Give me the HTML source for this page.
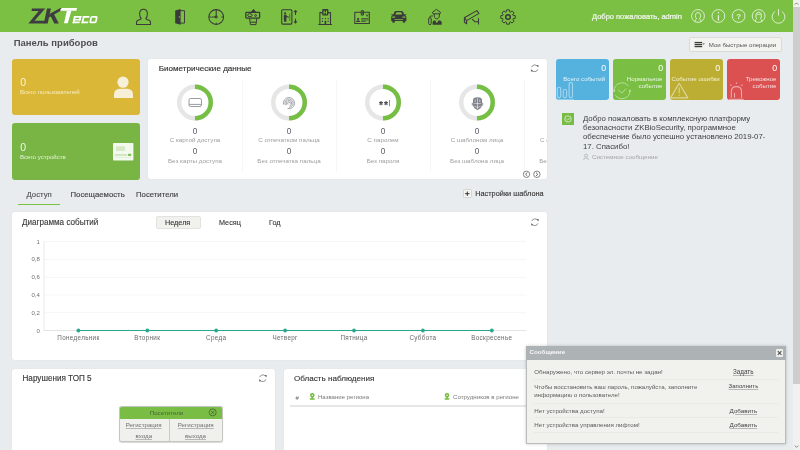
<!DOCTYPE html>
<html><head><meta charset="utf-8">
<style>
*{margin:0;padding:0;box-sizing:border-box}
html,body{width:800px;height:450px;overflow:hidden}
body{will-change:transform;background:#e8ecef;font-family:"Liberation Sans",sans-serif;position:relative;color:#333}
.a{position:absolute}
#hdr{left:0;top:0;width:793px;height:32.4px;background:#7bbf43}
#sb{left:793px;top:0;width:7px;height:450px;background:#f1f1f1}
#thumb{left:793px;top:7px;width:7px;height:377px;background:#cdcdcd}
.panel{position:absolute;background:#fff;border-radius:3px;box-shadow:0 0 0 0.6px #e1e5e8}
.card{position:absolute;border-radius:3px;color:#fff;margin-top:0.4px}
.t{position:absolute;white-space:nowrap;line-height:1}
svg{position:absolute;overflow:visible}
</style></head><body>
<div id="hdr" class="a"></div>
<!-- HEADER -->
<svg style="left:0;top:0" width="793" height="32" viewBox="0 0 793 32">
  <!-- logo -->
  <g fill="#3e3b42">
    <path d="M32 8.4 H45.2 L34.5 20.7 H45.4 L44.8 23.4 H28.4 L38.7 10.9 H31.5 Z"/>
    <path d="M47 8.4 H50.9 L47.7 23.4 H43.8 Z"/>
    <path d="M49.4 13.9 L60 8.3 H65 L48.8 17.4 Z"/>
    <path d="M50.4 15.8 L53.8 13.8 L58.8 23.4 H54.4 Z"/>
  </g>
  <g fill="#fff">
    <path d="M61.8 8.1 H77 L76.4 10.8 H60.2 L60.5 9.5 Z"/>
    <path d="M66.8 10.7 H71.4 L67.8 23.3 H64 Z"/>
  </g>
  <g fill="#fff" transform="translate(0 23.3) skewX(-12) translate(0 -23.3)">
    <rect x="72.5" y="16" width="7.4" height="1.7"/>
    <rect x="72.5" y="18.9" width="7.4" height="1.5"/>
    <rect x="72.5" y="21.6" width="7" height="1.7"/>
    <rect x="72.5" y="16" width="1.8" height="7.3"/>
    <rect x="78.1" y="16" width="1.8" height="4.4"/>
    <rect x="81.4" y="16" width="6.6" height="1.7"/>
    <rect x="81.4" y="21.6" width="6.6" height="1.7"/>
    <rect x="81.4" y="16" width="1.8" height="7.3"/>
    <rect x="89.9" y="16.85" width="5.6" height="5.6" rx="0.8" fill="none" stroke="#fff" stroke-width="1.7"/>
  </g>
  <g fill="none" stroke="#3a3a3a" stroke-width="1.05" stroke-linecap="round" stroke-linejoin="round">
    <!-- person -->
    <path d="M136.5 24.5 L136.5 22.3 Q136.8 20 140.2 19.5 L141.2 18.6 Q139.6 17.2 139.6 13.6 Q139.8 9.2 143.5 9.2 Q147.2 9.2 147.4 13.6 Q147.4 17.2 145.8 18.6 L146.8 19.5 Q150.2 20 150.5 22.3 L150.5 24.5 Z"/>
    <!-- door -->
    <path d="M180.4 10.7 H184.5 V23.1 H180.4" stroke-width="0.95"/>
    <!-- clock -->
    <circle cx="216.2" cy="17" r="7.4"/>
    <path d="M216.2 10.2 V16 M215.2 17 H211.8 M216.2 9.6 V11 M216.2 23 V24.4 M209.4 17 H210.6 M221.8 17 H223"/>
    <circle cx="216.2" cy="17" r="0.9"/>
    <!-- elevator -->
    <rect x="281.7" y="9.8" width="10.2" height="14.3" rx="1"/>
    <path d="M295.5 10.5 V14.5 M294.3 11.8 L295.5 10.5 L296.7 11.8 M295.5 19 V23 M294.3 21.7 L295.5 23 L296.7 21.7"/>
    <path d="M289.8 14 V20.5" stroke-width="0.6"/>
    <!-- hospital -->
    <path d="M318.8 24.4 H331.6 M319.9 24.4 V12.6 H322.3 M328.3 12.6 H330.5 V24.4"/>
    <!-- id card -->
    <path d="M361 12.3 H354.8 V23.5 H369.3 V12.3 H363.6"/>
    <rect x="361.2" y="10.4" width="2.3" height="4.8" rx="1.1"/>
    <path d="M366.2 14.6 L367.2 16.4 L368 14.6 M361.6 18.6 H368 M361.6 20 H368 M361.6 21.4 H365.5" stroke-width="0.75"/>
    <!-- camera -->
    <path d="M464.4 17.8 L476.8 10.6 L479 13.4 L466.6 20.6 Z"/>
    <path d="M464.4 17.8 V22 L466.6 23.8 V20.6 M472.5 19.3 L474.8 21.7 H478.5 M478.5 18.5 V24"/>
    <!-- gear -->
    <path d="M513.08 14.90 L513.26 15.39 L515.17 15.61 L515.17 18.39 L513.26 18.61 L513.08 19.10 L512.86 19.58 L514.05 21.08 L512.08 23.05 L510.58 21.86 L510.10 22.08 L509.61 22.26 L509.39 24.17 L506.61 24.17 L506.39 22.26 L505.90 22.08 L505.42 21.86 L503.92 23.05 L501.95 21.08 L503.14 19.58 L502.92 19.10 L502.74 18.61 L500.83 18.39 L500.83 15.61 L502.74 15.39 L502.92 14.90 L503.14 14.42 L501.95 12.92 L503.92 10.95 L505.42 12.14 L505.90 11.92 L506.39 11.74 L506.61 9.83 L509.39 9.83 L509.61 11.74 L510.10 11.92 L510.58 12.14 L512.08 10.95 L514.05 12.92 L512.86 14.42 Z" stroke-width="1"/>
    <circle cx="508" cy="17" r="2.3" stroke-width="1.5"/>
  </g>
  <g fill="#3a3a3a">
    <!-- door leaf -->
    <path d="M175.2 10.6 L180.6 9.1 V24.8 L175.2 23.3 Z"/><circle cx="179.4" cy="17" r="0.75" fill="#7bbf43"/>
    
    <!-- elevator person -->
    <circle cx="285.1" cy="13.3" r="1.1"/>
    <path d="M283.9 14.7 H286.4 L286.7 16 L289.2 16.8 L289 17.5 L286.4 17.2 V21.8 H284.1 L283.8 18.5 Z"/>
    <!-- hospital H + windows -->
    <rect x="322.2" y="9.1" width="6.2" height="6.4" rx="1"/>
    <path d="M323.6 10.6 h1 v1.6 h1.4 v-1.6 h1 v3.6 h-1 v-1.1 h-1.4 v1.1 h-1 Z" fill="#7bbf43"/>
    <rect x="321.9" y="18.1" width="1.2" height="1"/><rect x="324.8" y="18.1" width="1.2" height="1"/><rect x="327.6" y="18.1" width="1.2" height="1"/>
    <rect x="321.9" y="20.6" width="1" height="1.4"/><rect x="327.6" y="20.6" width="1" height="1.4"/>
    <rect x="324.6" y="20.8" width="1.6" height="3.6"/>
    <!-- id person -->
    <circle cx="358.1" cy="19" r="1.1"/>
    <path d="M356 21.9 Q356.2 20.2 358.1 20.2 Q360 20.2 360.2 21.9 Z"/>
    <rect x="361.9" y="11.6" width="0.9" height="2.6"/>
    <!-- car -->
    <path fill-rule="evenodd" d="M391.2 20.9 V17.2 Q391.2 15.6 392.8 15.1 L391 14.6 L391.3 13.9 L393.3 14.4 L394.7 11.5 Q395.1 10.9 396 10.9 H401.6 Q402.5 10.9 402.9 11.5 L404.3 14.4 L406.3 13.9 L406.6 14.6 L404.8 15.1 Q406.4 15.6 406.4 17.2 V20.9 Z M395.3 14.6 H402.3 L401.5 12.7 Q401.3 12.3 400.8 12.3 H396.8 Q396.3 12.3 396.1 12.7 Z M392.2 16.6 H395.3 L395 17.7 H392.2 Z M405.4 16.6 H402.3 L402.6 17.7 H405.4 Z M394.6 19.2 H403 V19.9 H394.6 Z"/>
    <rect x="392.3" y="20.8" width="2.6" height="1.8"/><rect x="402.7" y="20.8" width="2.6" height="1.8"/>
    <!-- police -->
    <path d="M432.6 24.8 V21.9 Q433 20.6 435 20.3 L436.8 23.2 L438.6 20.3 Q441.2 20.6 441.7 21.9 V24.8 Z"/>
  </g>
  <g fill="none" stroke="#3a3a3a" stroke-width="1">
    <path d="M432.4 12.4 L436.4 9.4 L440.6 12.4 L440 13.8 H433 Z"/>
    <path d="M434.2 14 Q434 18.8 436.8 18.9 Q439.6 18.8 439.4 14"/>
    <rect x="428.7" y="17.6" width="2.5" height="7.1" rx="1.25"/>
    <path d="M429.4 17.6 Q429.8 15.4 432.8 15.9"/>
    <!-- money hand -->
    <rect x="245.8" y="12.4" width="13.8" height="5.6" rx="0.5" stroke-width="1.25"/>
    <ellipse cx="249.9" cy="15.2" rx="2.3" ry="1.5"/>
    <circle cx="255.6" cy="15.5" r="0.9"/>
    <path d="M249.6 18.2 L250.4 24.6 H256 L256.8 18.2 M250.4 22.2 H256"/>
    <path d="M251.2 12.4 L253.5 9.4 L255.8 12.4 Z" fill="#3a3a3a"/>
  </g>
  <!-- right icons -->
  <g fill="none" stroke="#e6f2dc" stroke-width="0.9">
    <circle cx="698" cy="16" r="6.4"/>
    <path d="M695 21.6 Q695 19.5 696.6 18.8 Q695.4 17.6 695.4 15.5 Q695.5 12.5 698 12.5 Q700.5 12.5 700.6 15.5 Q700.6 17.6 699.4 18.8 Q701 19.5 701 21.6"/>
    <circle cx="718.4" cy="16" r="6.4"/>
    <path d="M718.4 15.3 V20.4" stroke-width="1.2"/>
    <circle cx="738.6" cy="16" r="6.4"/>
    <circle cx="758.6" cy="16" r="6.4"/>
    <path d="M755.4 21.8 Q755.2 19.4 756.7 18.8 Q755.8 17.6 755.8 15.3 Q756 12.2 758.6 12.2 Q761.2 12.2 761.4 15.3 Q761.4 17.6 760.5 18.8 Q762 19.4 761.8 21.8"/>
    <path d="M756.6 15 Q758.6 13.2 760.6 15" />
    <path d="M775.2 11.4 A6.4 6.4 0 1 0 781.8 11.4"/>
    <path d="M778.5 9 V15.6"/>
  </g>
  <circle cx="718.4" cy="12.8" r="0.8" fill="#e6f2dc"/>
  <text x="738.6" y="19" text-anchor="middle" font-family="Liberation Sans" font-size="8" font-weight="bold" fill="#e6f2dc">?</text>
  <text x="592" y="18.6" font-family="Liberation Sans" font-size="7.5" fill="#f4f9ef" stroke="#f4f9ef" stroke-width="0.2">Добро пожаловать, admin</text>
</svg>
<div id="sb" class="a"></div>
<div id="thumb" class="a"></div>
<!--CONTENT-->
<!-- title -->
<div class="t" style="left:13.7px;top:38.1px;font-size:9.5px;font-weight:bold;color:#505050">Панель приборов</div>

<!-- left cards -->
<div class="card" style="left:12px;top:58.2px;width:127.5px;height:56.6px;background:#dab737"></div>
<div class="t" style="left:20.2px;top:76.7px;font-size:10.5px;color:#fbf3d6">0</div>
<div class="t" style="left:20px;top:88.9px;font-size:6.1px;color:#f6ebc4">Всего пользователей</div>
<svg style="left:0;top:0" width="1" height="1">
  <circle cx="123" cy="82.2" r="5.6" fill="#f7efd8"/>
  <path d="M114 98 V95 Q114 88.8 120 88.8 H126.9 Q133 88.8 133 95 V98 Z" fill="#f7efd8"/>
</svg>
<div class="card" style="left:12px;top:122.8px;width:127.5px;height:56.4px;background:#78b545"></div>
<div class="t" style="left:20.2px;top:141.6px;font-size:10.5px;color:#eef7e6">0</div>
<div class="t" style="left:20px;top:153.9px;font-size:6.1px;color:#e4f1da">Всего устройств</div>
<svg style="left:0;top:0" width="1" height="1">
  <rect x="113" y="143" width="20.4" height="17.5" rx="0.8" fill="#f4f9f0"/>
  <rect x="116" y="146.3" width="9" height="4.6" fill="#d5e9c6"/>
  <rect x="115" y="154.6" width="12" height="0.8" fill="#9ccc7c"/>
  <rect x="127.8" y="153.8" width="3.6" height="2.2" rx="1" fill="#7fbf55"/>
  <rect x="115" y="157.3" width="16" height="0.6" fill="#d8ebcb"/>
  <circle cx="130.5" cy="147" r="0.35" fill="#bcdca8"/><circle cx="130.5" cy="149" r="0.35" fill="#bcdca8"/>
</svg>

<!-- biometric panel -->
<div class="panel" style="left:148px;top:59px;width:399px;height:120px;overflow:hidden">
  <div class="t" style="left:10.7px;top:6.3px;font-size:8.1px;color:#333;-webkit-text-stroke:0.15px #333">Биометрические данные</div>
<svg style="left:-148px;top:-59px" width="800" height="450">
<circle cx="195" cy="102.4" r="15.75" fill="none" stroke="#e6e6e6" stroke-width="4.5"/>
<path d="M195 86.65 A15.75 15.75 0 0 1 195 118.15" fill="none" stroke="#75bf44" stroke-width="4.5"/>
<text x="195" y="133.8" text-anchor="middle" font-size="8.2" fill="#565b66">0</text>
<text x="195" y="141.5" text-anchor="middle" font-size="6.25" fill="#9c9c9c">С картой доступа</text>
<text x="195" y="154.2" text-anchor="middle" font-size="8.2" fill="#565b66">0</text>
<text x="195" y="162.5" text-anchor="middle" font-size="6.25" fill="#9c9c9c">Без карты доступа</text>
<rect x="242" y="79" width="0.7" height="93" fill="#f2f2f2"/>
<circle cx="289" cy="102.4" r="15.75" fill="none" stroke="#e6e6e6" stroke-width="4.5"/>
<path d="M289 86.65 A15.75 15.75 0 0 1 289 118.15" fill="none" stroke="#75bf44" stroke-width="4.5"/>
<text x="289" y="133.8" text-anchor="middle" font-size="8.2" fill="#565b66">0</text>
<text x="289" y="141.5" text-anchor="middle" font-size="6.25" fill="#9c9c9c">С отпечатком пальца</text>
<text x="289" y="154.2" text-anchor="middle" font-size="8.2" fill="#565b66">0</text>
<text x="289" y="162.5" text-anchor="middle" font-size="6.25" fill="#9c9c9c">Без отпечатка пальца</text>
<rect x="336" y="79" width="0.7" height="93" fill="#f2f2f2"/>
<circle cx="383" cy="102.4" r="15.75" fill="none" stroke="#e6e6e6" stroke-width="4.5"/>
<path d="M383 86.65 A15.75 15.75 0 0 1 383 118.15" fill="none" stroke="#75bf44" stroke-width="4.5"/>
<text x="383" y="133.8" text-anchor="middle" font-size="8.2" fill="#565b66">0</text>
<text x="383" y="141.5" text-anchor="middle" font-size="6.25" fill="#9c9c9c">С паролем</text>
<text x="383" y="154.2" text-anchor="middle" font-size="8.2" fill="#565b66">0</text>
<text x="383" y="162.5" text-anchor="middle" font-size="6.25" fill="#9c9c9c">Без пароля</text>
<rect x="430" y="79" width="0.7" height="93" fill="#f2f2f2"/>
<circle cx="477" cy="102.4" r="15.75" fill="none" stroke="#e6e6e6" stroke-width="4.5"/>
<path d="M477 86.65 A15.75 15.75 0 0 1 477 118.15" fill="none" stroke="#75bf44" stroke-width="4.5"/>
<text x="477" y="133.8" text-anchor="middle" font-size="8.2" fill="#565b66">0</text>
<text x="477" y="141.5" text-anchor="middle" font-size="6.25" fill="#9c9c9c">С шаблоном лица</text>
<text x="477" y="154.2" text-anchor="middle" font-size="8.2" fill="#565b66">0</text>
<text x="477" y="162.5" text-anchor="middle" font-size="6.25" fill="#9c9c9c">Без шаблона лица</text>
<rect x="524" y="79" width="0.7" height="93" fill="#f2f2f2"/>
<circle cx="571" cy="102.4" r="15.75" fill="none" stroke="#e6e6e6" stroke-width="4.5"/>
<path d="M571 86.65 A15.75 15.75 0 0 1 571 118.15" fill="none" stroke="#75bf44" stroke-width="4.5"/>
<text x="571" y="133.8" text-anchor="middle" font-size="8.2" fill="#565b66">0</text>
<text x="571" y="141.5" text-anchor="middle" font-size="6.25" fill="#9c9c9c">С отпечатком ладони</text>
<text x="571" y="154.2" text-anchor="middle" font-size="8.2" fill="#565b66">0</text>
<text x="571" y="162.5" text-anchor="middle" font-size="6.25" fill="#9c9c9c">Без отпечатка ладони</text>
<g fill="none" stroke="#777983" stroke-width="0.75">
<rect x="189" y="98.5" width="12.5" height="8" rx="1.6"/>
<path d="M189.3 104.4 H201.2"/>
</g>
<g fill="none" stroke="#6a6c75" stroke-width="0.6"><path d="M288.35 104.23 A1.3 1.3 0 1 1 289.65 104.23"/><path d="M287.09 105.01 A2.7 2.7 0 1 1 289.70 105.71"/><path d="M285.45 105.15 A4.1 4.1 0 1 1 289.00 107.20"/><path d="M283.59 104.55 A5.6 5.6 0 1 1 287.55 108.51"/></g>
<path d="M381.00 101.10 L381.00 105.30 M382.82 102.15 L379.18 104.25 M382.82 104.25 L379.18 102.15 M386.00 101.10 L386.00 105.30 M387.82 102.15 L384.18 104.25 M387.82 104.25 L384.18 102.15 " stroke="#4d4f58" stroke-width="1.1" fill="none"/>
<rect x="389" y="100" width="0.8" height="6.2" fill="#6d6f78"/>
<path d="M473 100 Q473 97.2 477.5 97.2 Q482 97.2 482 100 V104.5 Q482 108.2 477.5 109.9 Q473 108.2 473 104.5 Z" fill="#80828b"/>
<path d="M472.3 102.8 V105.6 M482.7 102.8 V105.6" stroke="#80828b" stroke-width="0.9"/>
<path d="M477.5 98 V109 M473.8 103.6 H481.2 M475.2 99.5 V102 M479.8 99.5 V102 M474.5 106.5 Q477.5 108 480.5 106.5" stroke="#fff" stroke-width="0.55" fill="none"/>
<g fill="#7b7d86"><circle cx="526.5" cy="174" r="0.1"/></g>
<path d="M530.5 65.2 A3.2 3.2 0 1 0 531.4 70.5 M539.5 71 A3.2 3.2 0 1 0 538.6 65.5" fill="none" stroke="#888" stroke-width="0"/>

</svg>
</div>

<!-- panel extras -->
<svg style="left:0;top:0" width="1" height="1">
  <g fill="none" stroke="#666" stroke-width="0.7">
    <path d="M537.6 66.6 A3.3 3.3 0 0 0 531.6 67.2"/>
    <path d="M531.8 70 A3.3 3.3 0 0 0 537.8 69.4"/>
  </g>
  <path d="M536.2 65.2 L538.6 65 L538.2 67.6 Z M533.2 71.4 L530.8 71.6 L531.2 69 Z" fill="#707070"/>
  <g fill="none" stroke="#666" stroke-width="0.8">
    <circle cx="526.5" cy="174.3" r="3.2"/>
    <circle cx="536.9" cy="174.3" r="3.2"/>
  </g>
  <path d="M527.4 172.6 L525.6 174.3 L527.4 176" fill="none" stroke="#555" stroke-width="0.9"/>
  <path d="M536 172.6 L537.8 174.3 L536 176" fill="none" stroke="#555" stroke-width="0.9"/>
</svg>

<!-- quick ops button -->
<div class="a" style="left:689.3px;top:37.4px;width:93.2px;height:14.2px;background:#f3f4ef;border:0.8px solid #d9dbd5;border-radius:2px"></div>
<svg style="left:0;top:0" width="1" height="1">
  <rect x="694.6" y="41.9" width="7.6" height="1.3" fill="#3c3c3c"/>
  <rect x="694.6" y="43.9" width="7.6" height="1.3" fill="#3c3c3c"/>
  <rect x="694.6" y="45.9" width="7.6" height="1.3" fill="#3c3c3c"/>
  <path d="M702.6 43.4 H704.8 L703.7 44.8 Z" fill="#3c3c3c"/>
</svg>
<div class="t" style="left:708.8px;top:41.6px;font-size:6.1px;color:#555">Мои быстрые операции</div>

<!-- KPI cards -->
<div class="card" style="left:556px;top:58.3px;width:53px;height:41.6px;background:#55b1de;overflow:hidden">
  <div class="t" style="right:2.9px;top:5.6px;font-size:8.8px;color:#fff">0</div>
  <div class="t" style="right:3.8px;top:17.8px;font-size:6.15px;color:#e6f4fb">Всего событий</div>
  <svg style="left:-556px;top:-58.7px" width="800" height="450">
    <g fill="none" stroke="#a3d5ef" stroke-width="1.15">
      <rect x="557.3" y="87.2" width="3.4" height="10.4" rx="1.5"/>
      <rect x="563.2" y="89.5" width="3.4" height="8.1" rx="1.5"/>
      <rect x="569.1" y="82.6" width="3.4" height="15" rx="1.5"/>
    </g>
    <rect x="556" y="99.2" width="18" height="1.2" fill="#9fd3ee"/>
  </svg>
</div>
<div class="card" style="left:613px;top:58.3px;width:53px;height:41.6px;background:#7abf43;overflow:hidden">
  <div class="t" style="right:2.9px;top:5.6px;font-size:8.8px;color:#fff">0</div>
  <div class="t" style="right:3.5px;top:17.6px;font-size:6.1px;color:#e9f5e0;text-align:right;line-height:6.7px">Нормальное<br>событие</div>
  <svg style="left:-613px;top:-58.7px" width="800" height="450">
    <g fill="none" stroke="#b9df9e" stroke-width="1">
      <path d="M614.10 90.80 A7.9 7.9 0 0 1 628.47 86.27"/>
      <path d="M629.90 90.80 A7.9 7.9 0 0 1 615.53 95.33"/>
      <path d="M618.2 89.6 L621.7 93.2 L626.1 88.5"/>
    </g>
    <circle cx="614.10" cy="90.8" r="1.1" fill="#b9df9e"/>
    <circle cx="629.90" cy="90.8" r="1.1" fill="#b9df9e"/>
  </svg>
</div>
<div class="card" style="left:670px;top:58.3px;width:53px;height:41.6px;background:#bcae33;overflow:hidden">
  <div class="t" style="right:2.9px;top:5.6px;font-size:8.8px;color:#fff">0</div>
  <div class="t" style="right:3.3px;top:17.8px;font-size:6.1px;color:#f3efd0">Событие ошибки</div>
  <svg style="left:-670px;top:-58.7px" width="800" height="450">
    <path d="M679.2 83.2 L687.8 97.9 H670.6 Z" fill="none" stroke="#ddd6a0" stroke-width="1.1" stroke-linejoin="round"/>
    <rect x="678.7" y="87.5" width="1" height="6" fill="#ddd6a0"/>
    <circle cx="679.2" cy="95.4" r="0.6" fill="#ddd6a0"/>
  </svg>
</div>
<div class="card" style="left:727px;top:58.3px;width:53px;height:41.6px;background:#db5050;overflow:hidden">
  <div class="t" style="right:2.9px;top:5.6px;font-size:8.8px;color:#fff">0</div>
  <div class="t" style="right:3.5px;top:17.6px;font-size:6.1px;color:#f8e0e0;text-align:right;line-height:6.7px">Тревожное<br>событие</div>
  <svg style="left:-727px;top:-58.7px" width="800" height="450">
    <g fill="none" stroke="#eea9a9" stroke-width="1.1">
      <path d="M731.3 97.8 V91.6 Q731.3 86.6 736.4 86.6 Q741.5 86.6 741.5 91.6 V97.8"/>
      <path d="M734.5 97.8 V93"/>
      <path d="M736.4 82.5 V84 M730.3 84.6 L731.5 85.8 M742.5 84.6 L741.3 85.8"/>
    </g>
    <rect x="729.2" y="98.8" width="14.4" height="1.5" fill="#eda5a5"/>
  </svg>
</div>

<!-- welcome msg -->
<div class="a" style="left:562px;top:113px;width:12px;height:12px;background:#78bb45"></div>
<svg style="left:0;top:0" width="1" height="1">
  <circle cx="568" cy="119" r="3.2" fill="none" stroke="#e4f2d8" stroke-width="0.8"/>
  <path d="M566.5 119.1 L567.7 120.2 L569.7 117.9" fill="none" stroke="#e4f2d8" stroke-width="0.8"/>
</svg>
<div class="t" style="left:583px;top:113.5px;font-size:7.8px;color:#3e3e3e;line-height:9.4px">Добро пожаловать в комплексную платформу<br>безопасности ZKBioSecurity, программное<br>обеспечение было успешно установлено 2019-07-<br>17. Спасибо!</div>
<svg style="left:0;top:0" width="1" height="1">
  <g fill="none" stroke="#aaa" stroke-width="0.7">
    <circle cx="586" cy="155.6" r="1.5"/>
    <path d="M583.6 160.2 Q583.8 157.8 586 157.8 Q588.2 157.8 588.4 160.2"/>
  </g>
</svg>
<div class="t" style="left:592px;top:153.7px;font-size:6.2px;color:#a3a3a3">Системное сообщение</div>

<!-- tabs -->
<div class="t" style="left:26.5px;top:191.4px;font-size:7.75px;color:#555;-webkit-text-stroke:0.15px #555">Доступ</div>
<div class="t" style="left:70.5px;top:191.4px;font-size:7.75px;color:#444;-webkit-text-stroke:0.15px #444">Посещаемость</div>
<div class="t" style="left:136px;top:191.4px;font-size:7.75px;color:#444;-webkit-text-stroke:0.15px #444">Посетители</div>
<div class="a" style="left:18px;top:203.8px;width:42px;height:1.5px;background:#7ac143"></div>
<div class="a" style="left:463px;top:189px;width:8.6px;height:9.4px;background:#f3f4f0;border:0.6px solid #d4d6d2;border-radius:1.5px"></div>
<svg style="left:0;top:0" width="1" height="1">
  <path d="M465.1 193.7 H469.5 M467.3 191.5 V195.9" stroke="#333" stroke-width="1"/>
</svg>
<div class="t" style="left:475.2px;top:190.1px;font-size:7.35px;color:#333;-webkit-text-stroke:0.12px #333">Настройки шаблона</div>

<!-- chart panel -->
<div class="panel" style="left:12px;top:211.6px;width:535px;height:148.2px"></div>
<div class="t" style="left:21.9px;top:219.4px;font-size:8.15px;color:#3a3a3a;-webkit-text-stroke:0.12px #3a3a3a">Диаграмма событий</div>
<div class="a" style="left:156px;top:215.6px;width:44.6px;height:13.4px;background:#f1f1ee;border:0.6px solid #e2e2de;border-radius:2px"></div>
<div class="t" style="left:165px;top:219.3px;font-size:7.25px;color:#333;-webkit-text-stroke:0.1px #333">Неделя</div>
<div class="t" style="left:219px;top:219.3px;font-size:7.25px;color:#333;-webkit-text-stroke:0.1px #333">Месяц</div>
<div class="t" style="left:269px;top:219.3px;font-size:7.25px;color:#333;-webkit-text-stroke:0.1px #333">Год</div>
<svg style="left:0;top:0" width="1" height="1">
  <g fill="none" stroke="#666" stroke-width="0.7">
    <path d="M537.8 220.5 A3.3 3.3 0 0 0 531.8 221.1"/>
    <path d="M532 223.9 A3.3 3.3 0 0 0 538 223.3"/>
  </g>
  <path d="M536.4 219.1 L538.8 218.9 L538.4 221.5 Z M533.4 225.3 L531 225.5 L531.4 222.9 Z" fill="#707070"/>
  <!-- grid -->
  <g fill="#f0f0f0">
    <rect x="44" y="241.3" width="482" height="0.6"/>
    <rect x="44" y="259.1" width="482" height="0.6"/>
    <rect x="44" y="276.9" width="482" height="0.6"/>
    <rect x="44" y="294.7" width="482" height="0.6"/>
    <rect x="44" y="312.5" width="482" height="0.6"/>
  </g>
  <rect x="43.6" y="241.3" width="0.8" height="89.4" fill="#e3e3e3"/>
  <rect x="44" y="330" width="482" height="1" fill="#e3e3e3"/>
  <g font-size="6" fill="#707070" text-anchor="end" font-family="Liberation Sans">
    <text x="39.8" y="243.6">1</text>
    <text x="39.8" y="261.4">0,8</text>
    <text x="39.8" y="279.2">0,6</text>
    <text x="39.8" y="297">0,4</text>
    <text x="39.8" y="314.8">0,2</text>
    <text x="39.8" y="332.6">0</text>
  </g>
  <path d="M78.4 330.5 H491.8" stroke="#2aa88b" stroke-width="1.2"/>
  <g fill="#2aa88b">
    <circle cx="78.4" cy="330.5" r="1.9"/><circle cx="147.3" cy="330.5" r="1.9"/><circle cx="216.2" cy="330.5" r="1.9"/>
    <circle cx="285.1" cy="330.5" r="1.9"/><circle cx="354" cy="330.5" r="1.9"/><circle cx="422.9" cy="330.5" r="1.9"/>
    <circle cx="491.8" cy="330.5" r="1.9"/>
  </g>
  <g font-size="6.3" fill="#6a6a6a" text-anchor="middle" font-family="Liberation Sans" letter-spacing="0.33">
    <text x="78.4" y="339.8">Понедельник</text>
    <text x="147.3" y="339.8">Вторник</text>
    <text x="216.2" y="339.8">Среда</text>
    <text x="285.1" y="339.8">Четверг</text>
    <text x="354" y="339.8">Пятница</text>
    <text x="422.9" y="339.8">Суббота</text>
    <text x="491.8" y="339.8">Воскресенье</text>
  </g>
</svg>

<!-- lower panels -->
<div class="panel" style="left:12px;top:368.8px;width:263px;height:90px"></div>
<div class="t" style="left:22.5px;top:374.9px;font-size:8.15px;color:#333;-webkit-text-stroke:0.12px #333">Нарушения ТОП 5</div>
<svg style="left:0;top:0" width="1" height="1">
  <g fill="none" stroke="#666" stroke-width="0.7">
    <path d="M265.8 376.5 A3.3 3.3 0 0 0 259.8 377.1"/>
    <path d="M260 379.9 A3.3 3.3 0 0 0 266 379.3"/>
  </g>
  <path d="M264.4 375.1 L266.8 374.9 L266.4 377.5 Z M261.4 381.3 L259 381.5 L259.4 378.9 Z" fill="#707070"/>
</svg>
<!-- tooltip -->
<div class="a" style="left:118.8px;top:405.8px;width:103.8px;height:36.7px;background:#f0f1ec;border:0.7px solid #c3c5c0;border-radius:2.5px;box-shadow:0 0.5px 1px rgba(0,0,0,0.15);overflow:hidden">
  <div class="a" style="left:0;top:0;width:103px;height:12.6px;background:#79bd45"></div>
  <div class="a" style="left:49.3px;top:12.6px;width:0.8px;height:24px;background:#c8cac5"></div>
</div>
<div class="t" style="left:149.7px;top:409.5px;font-size:6.2px;color:#4a6139">Посетители</div>
<svg style="left:0;top:0" width="1" height="1">
  <circle cx="212.7" cy="412.4" r="3.5" fill="none" stroke="#4a6139" stroke-width="0.8"/>
  <path d="M211.2 410.9 L214.2 413.9 M214.2 410.9 L211.2 413.9" stroke="#4a6139" stroke-width="0.8"/>
</svg>
<div class="t" style="left:125.7px;top:421.8px;font-size:6.15px;color:#6e6e6e;text-decoration:underline;text-decoration-color:#b8b8b8;text-decoration-thickness:0.5px;text-underline-offset:0.8px">Регистрация</div>
<div class="t" style="left:135.5px;top:433.4px;font-size:6.15px;color:#6e6e6e;text-decoration:underline;text-decoration-color:#b8b8b8;text-decoration-thickness:0.5px;text-underline-offset:0.8px">входа</div>
<div class="t" style="left:177.8px;top:421.8px;font-size:6.15px;color:#6e6e6e;text-decoration:underline;text-decoration-color:#b8b8b8;text-decoration-thickness:0.5px;text-underline-offset:0.8px">Регистрация</div>
<div class="t" style="left:185px;top:433.4px;font-size:6.15px;color:#6e6e6e;text-decoration:underline;text-decoration-color:#b8b8b8;text-decoration-thickness:0.5px;text-underline-offset:0.8px">выхода</div>

<div class="panel" style="left:284px;top:368.8px;width:263px;height:90px"></div>
<div class="t" style="left:294px;top:375px;font-size:8.1px;color:#333;-webkit-text-stroke:0.12px #333">Область наблюдения</div>
<div class="t" style="left:295.6px;top:394.8px;font-size:6px;color:#666">#</div>
<svg style="left:0;top:0" width="1" height="1">
  <g fill="#76bd3e"><path fill-rule="evenodd" d="M310.0 395.3 A2.3 2.3 0 1 1 314.6 395.3 Q314.6 396.8 312.3 398.6 Q310.0 396.8 310.0 395.3 Z M311.55 395.2 A0.75 0.75 0 1 0 313.05 395.2 A0.75 0.75 0 1 0 311.55 395.2 Z"/><ellipse cx="312.3" cy="398.9" rx="2.7" ry="0.95"/><path fill-rule="evenodd" d="M444.7 395.3 A2.3 2.3 0 1 1 449.3 395.3 Q449.3 396.8 447 398.6 Q444.7 396.8 444.7 395.3 Z M446.25 395.2 A0.75 0.75 0 1 0 447.75 395.2 A0.75 0.75 0 1 0 446.25 395.2 Z"/><ellipse cx="447" cy="398.9" rx="2.7" ry="0.95"/></g>
</svg>
<div class="t" style="left:318px;top:394.2px;font-size:6.05px;color:#7a7a7a">Название региона</div>
<div class="t" style="left:453px;top:394.2px;font-size:6.15px;color:#7a7a7a">Сотрудников в регионе</div>
<div class="a" style="left:290.2px;top:405px;width:240px;height:1.8px;background:#e6e6e6"></div>
<!-- message popup -->
<div class="a" style="left:526px;top:346px;width:260.3px;height:97.6px;background:#f1f2ed;border:0.7px solid #b9bcbd;box-shadow:0 0 3px rgba(0,0,0,0.22)"></div>
<div class="a" style="left:526px;top:346px;width:260.3px;height:13.7px;background:#adb2b5"></div>
<div class="t" style="left:529.6px;top:348.9px;font-size:6.2px;font-weight:bold;color:#f7f7f7">Сообщение</div>
<div class="a" style="left:776px;top:349.3px;width:7.2px;height:7.3px;background:#eef0ee;border-radius:1px"></div>
<svg style="left:0;top:0" width="1" height="1">
  <path d="M777.8 351.2 L781.4 354.8 M781.4 351.2 L777.8 354.8" stroke="#555" stroke-width="1.2"/>
  <g fill="#e3e4df">
    <rect x="534" y="379" width="244" height="0.6"/>
    <rect x="534" y="403" width="244" height="0.6"/>
    <rect x="534" y="417.3" width="244" height="0.6"/>
    <rect x="534" y="432.4" width="244" height="0.6"/>
  </g>
</svg>
<div class="t" style="left:534.2px;top:369.4px;font-size:6.2px;color:#5a5a5a">Обнаружено, что сервер эл. почты не задан!</div>
<div class="t" style="left:534.2px;top:382.8px;font-size:6.15px;color:#5a5a5a;line-height:8.5px">Чтобы восстановить ваш пароль, пожалуйста, заполните<br>информацию о пользователе!</div>
<div class="t" style="left:534.2px;top:407.6px;font-size:6.2px;color:#5a5a5a">Нет устройства доступа!</div>
<div class="t" style="left:534.2px;top:421.8px;font-size:6.2px;color:#5a5a5a">Нет устройства управления лифтом!</div>
<div class="t" style="left:733px;top:369.4px;font-size:6.3px;color:#444;text-decoration:underline;text-decoration-color:#b8b8b8;text-decoration-thickness:0.5px;text-underline-offset:0.8px">Задать</div>
<div class="t" style="left:728.6px;top:382.9px;font-size:6.05px;color:#444;text-decoration:underline;text-decoration-color:#b8b8b8;text-decoration-thickness:0.5px;text-underline-offset:0.8px">Заполнить</div>
<div class="t" style="left:729.6px;top:407.6px;font-size:6.25px;color:#444;text-decoration:underline;text-decoration-color:#b8b8b8;text-decoration-thickness:0.5px;text-underline-offset:0.8px">Добавить</div>
<div class="t" style="left:729.6px;top:421.8px;font-size:6.25px;color:#444;text-decoration:underline;text-decoration-color:#b8b8b8;text-decoration-thickness:0.5px;text-underline-offset:0.8px">Добавить</div>

<!-- scrollbar arrows -->
<svg style="left:0;top:0" width="1" height="1">
  <path d="M794.8 4.6 L796.5 2.9 L798.2 4.6" fill="none" stroke="#777" stroke-width="0.9"/>
  <path d="M794.8 445.6 L796.5 447.3 L798.2 445.6" fill="none" stroke="#777" stroke-width="0.9"/>
</svg>


</body></html>
